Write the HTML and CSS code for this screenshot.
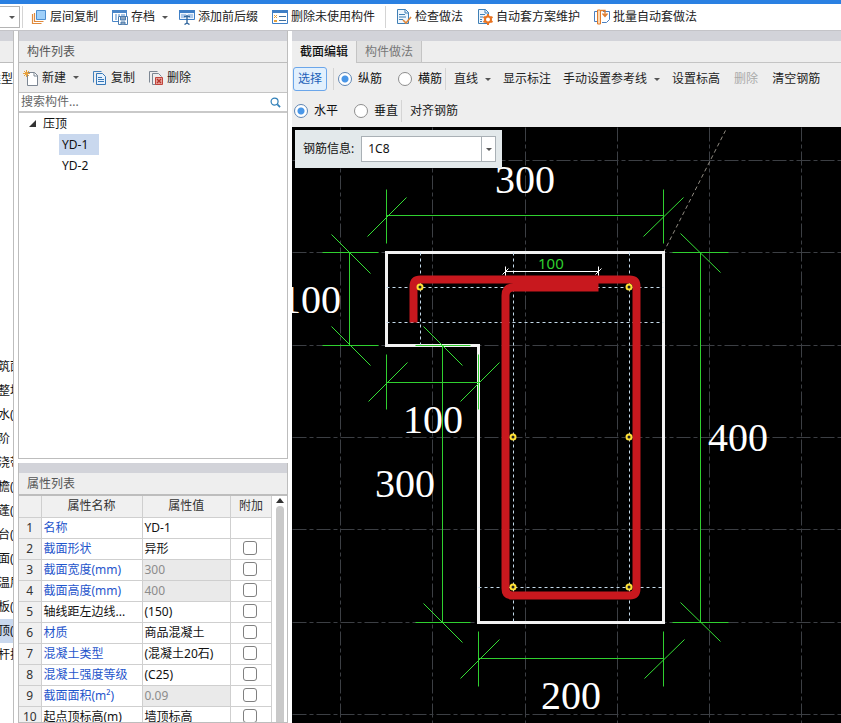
FILE: index.html
```
<!DOCTYPE html>
<html lang="zh-CN">
<head>
    <meta charset="UTF-8">
    <title>截面编辑</title>
    <link rel="stylesheet" href="styles.css">
</head>
<body>

<header class="topbar">
    <span class="filter"><select aria-label="楼层"><option></option></select><i class="caret"></i></span>
    <span class="sep"></span>
    <button class="tool">
        <svg class="icon" viewBox="0 0 16 16"><path d="M1.500 5v9.500h9M3.500 4v8.500h9" fill="none" stroke="#e08a3c" stroke-width="1.200"/><path d="M5.500 1.500h9v9h-9z" fill="#9fd0fa" stroke="#4d8fd0"/></svg>
        层间复制
    </button>
    <button class="tool has-caret">
        <svg class="icon" viewBox="0 0 16 16"><path d="M.500 1.500h14v11H.500z" fill="#fff" stroke="#4a86c8"/><path d="M0 1h15v3H0z" fill="#4a86c8"/><path d="M3 6h2M6 6h2M9 6h4M3 8h2M3 10h2" stroke="#4a86c8"/><path d="M6.500 7.500h9v8h-9z" fill="#fff" stroke="#4a7cb0"/><path d="M8.500 8v3h5V8M9 13h4v3H9z" fill="#8ba3bd" stroke="#4a7cb0"/></svg>
        存档<i class="caret"></i>
    </button>
    <button class="tool">
        <svg class="icon" viewBox="0 0 16 16"><path d="M.500 1.500h15v9H.500z" fill="#eef5fd" stroke="#3f7fc6"/><path d="M0 1h16v3H0z" fill="#3f7fc6"/><path d="M2 6h5M2 8h4M9 6h5M10 8h4" stroke="#6a9dd8"/><path d="M8 6v9M5 7.500h6M5.500 15.500 8 14l2.500 1.500" fill="none" stroke="#34699f" stroke-width="1.400"/></svg>
        添加前后缀
    </button>
    <button class="tool">
        <svg class="icon" viewBox="0 0 16 16"><path d="M.500 1.500h15v13H.500z" fill="#fff" stroke="#3f7fc6"/><path d="M0 1h16v3H0z" fill="#3f7fc6"/><path d="m2 6 3 3m0-3L2 9" stroke="#e6a23c"/><path d="M2 12h3" stroke="#e6a23c" stroke-width="2"/><path d="M7 7.500h7M7 11.500h7" stroke="#3f6f9f"/></svg>
        删除未使用构件
    </button>
    <span class="sep"></span>
    <button class="tool">
        <svg class="icon" viewBox="0 0 16 16"><path d="M1.500.500h8l3 3v11h-11z" fill="#eef6fd" stroke="#3f7fb5"/><path d="M9 .500V4h4M3 5.500h6M3 8h7M3 10.500h4" fill="none" stroke="#3f7fb5"/><path d="m7 11 3 3 5-6" fill="none" stroke="#e0873a" stroke-width="1.600"/></svg>
        检查做法
    </button>
    <button class="tool">
        <svg class="icon" viewBox="0 0 16 16"><path d="M1.500.500h7l3 3v11h-10z" fill="#eef6fd" stroke="#3f7fb5"/><path d="M8 .500V4h4M3 5.500h5M3 8h3M3 10.500h2M3 12.500h2" fill="none" stroke="#3f7fb5"/><path d="M11 5v11M6.500 7.800l9 5.400M15.500 7.800l-9 5.400" stroke="#e87422" stroke-width="2"/><circle cx="11" cy="10.500" r="3" fill="#fff" stroke="#e87422" stroke-width="2"/></svg>
        自动套方案维护
    </button>
    <button class="tool">
        <svg class="icon" viewBox="0 0 16 16"><path d="M4 2.500H.500v10H4M9 2.500h6.500v8l-3 3H8" fill="#fff" stroke="#4a7fc0"/><path d="M3.500 1h3v14h-3z" fill="#fbd9b5" stroke="#e07c2c"/><path d="M7 1.500h4v5M8.500 4.500l2.500 3 2.500-3" fill="none" stroke="#e07c2c" stroke-width="1.400"/></svg>
        批量自动套做法
    </button>
</header>

<main class="workspace">

    <nav class="modules">
        <div class="strip"></div>
        <div class="modules-title"></div>
        <p class="modules-head">类型</p>
        <ul>
            <li>筑面</li>
            <li>整地</li>
            <li>水(</li>
            <li>阶</li>
            <li>浇带</li>
            <li>檐(</li>
            <li>蓬(</li>
            <li>台(</li>
            <li>面(</li>
            <li>温层</li>
            <li>板(</li>
            <li class="current">顶(</li>
            <li>杆扶</li>
        </ul>
    </nav>

    <div class="sidebar">
        <section class="panel">
            <div class="strip"></div>
            <h2 class="panel-title">构件列表</h2>
            <div class="panel-tools">
                <button class="tool">
                    <svg class="icon" viewBox="0 0 16 16"><path d="M4.500 2.500h7l3 3v10h-10z" fill="#fff" stroke="#7d8793"/><path d="M11 2.500V6h4" fill="none" stroke="#7d8793"/><path d="M3.500 0v7M0 3.500h7M1 1l5 5M6 1 1 6" stroke="#e9a13b"/></svg>
                    新建<i class="caret"></i>
                </button>
                <button class="tool">
                    <svg class="icon" viewBox="0 0 16 16"><path d="M1.500 12.500v-11h8" fill="none" stroke="#4381bd"/><path d="M4.500 3.500h6l3 3v8h-9z" fill="#e6f1fc" stroke="#3577b8"/><path d="M6 7.500h4M6 9.500h6M6 11.500h6" stroke="#3577b8"/></svg>
                    复制
                </button>
                <button class="tool">
                    <svg class="icon" viewBox="0 0 16 16"><path d="M1.500 12.500v-11h8M4.500 14.500v-11h6l3 3" fill="none" stroke="#7d8793"/><path d="M4.500 14.500H8" stroke="#7d8793"/><path d="M7.500 7.500h7v7h-7z" fill="#e9a39c" stroke="#c0453c"/><path d="m9 9 4 4m0-4-4 4" stroke="#b5352c" stroke-width="1.300"/></svg>
                    删除
                </button>
            </div>
            <label class="search">
                <input type="text" placeholder="搜索构件..." aria-label="搜索构件">
                <svg class="lens" viewBox="0 0 12 12"><circle cx="5" cy="5" r="3.800" fill="none" stroke="#2f7fb8" stroke-width="1.300"/><path d="m8 8 3 3" stroke="#2f7fb8" stroke-width="1.800"/></svg>
            </label>
            <div class="tree">
                <div class="branch"><svg class="twist" viewBox="0 0 7 7"><path d="M7 0v7H0z" fill="#333"/></svg>压顶</div>
                <ul>
                    <li><span class="leaf current">YD-1</span></li>
                    <li><span class="leaf">YD-2</span></li>
                </ul>
            </div>
        </section>

        <section class="panel">
            <div class="strip"></div>
            <h2 class="panel-title">属性列表</h2>
            <div class="props-wrap">
                <table class="props">
                    <colgroup><col class="c-num"><col class="c-name"><col><col class="c-add"></colgroup>
                    <thead>
                        <tr><th></th><th>属性名称</th><th>属性值</th><th>附加</th></tr>
                    </thead>
                    <tbody>
                        <tr><th>1</th><td class="key">名称</td><td>YD-1</td><td></td></tr>
                        <tr><th>2</th><td class="key">截面形状</td><td>异形</td><td class="add"><input type="checkbox" aria-label="附加 截面形状"></td></tr>
                        <tr><th>3</th><td class="key">截面宽度(mm)</td><td class="locked">300</td><td class="add"><input type="checkbox" aria-label="附加 截面宽度"></td></tr>
                        <tr><th>4</th><td class="key">截面高度(mm)</td><td class="locked">400</td><td class="add"><input type="checkbox" aria-label="附加 截面高度"></td></tr>
                        <tr><th>5</th><td>轴线距左边线...</td><td>(150)</td><td class="add"><input type="checkbox" aria-label="附加 轴线距左边线"></td></tr>
                        <tr><th>6</th><td class="key">材质</td><td>商品混凝土</td><td class="add"><input type="checkbox" aria-label="附加 材质"></td></tr>
                        <tr><th>7</th><td class="key">混凝土类型</td><td>(混凝土20石)</td><td class="add"><input type="checkbox" aria-label="附加 混凝土类型"></td></tr>
                        <tr><th>8</th><td class="key">混凝土强度等级</td><td>(C25)</td><td class="add"><input type="checkbox" aria-label="附加 混凝土强度等级"></td></tr>
                        <tr><th>9</th><td class="key">截面面积(m²)</td><td class="locked">0.09</td><td class="add"><input type="checkbox" aria-label="附加 截面面积"></td></tr>
                        <tr><th>10</th><td>起点顶标高(m)</td><td>墙顶标高</td><td class="add"><input type="checkbox" aria-label="附加 起点顶标高"></td></tr>
                    </tbody>
                </table>
                <div class="scrollbar">
                    <svg class="scroll-up" viewBox="0 0 8 5"><path d="M0 5 4 0l4 5z" fill="#333"/></svg>
                    <div class="thumb"></div>
                </div>
            </div>
        </section>
    </div>

    <section class="editor">
        <div class="strip"></div>
        <div class="tabs">
            <button class="tab active">截面编辑</button>
            <button class="tab">构件做法</button>
        </div>

        <div class="editor-tools">
            <div class="row">
                <button class="tool pick">选择</button>
                <span class="sep"></span>
                <label class="radio"><input type="radio" name="bar" checked>纵筋</label>
                <label class="radio"><input type="radio" name="bar">横筋</label>
                <span class="sep"></span>
                <button class="tool">直线<i class="caret"></i></button>
                <button class="tool">显示标注</button>
                <button class="tool">手动设置参考线<i class="caret"></i></button>
                <button class="tool">设置标高</button>
                <button class="tool" disabled>删除</button>
                <button class="tool">清空钢筋</button>
            </div>
            <div class="row">
                <label class="radio"><input type="radio" name="dir" checked>水平</label>
                <label class="radio"><input type="radio" name="dir">垂直</label>
                <span class="sep"></span>
                <button class="tool">对齐钢筋</button>
            </div>
        </div>

        <div class="canvas">
            <svg class="drawing">
                <g transform="translate(.5 .5)">
                    <!-- axis grid -->
                    <path class="grid" d="M48 0v2000M140 0v2000M233 0v2000M325 0v2000M417 0v2000M509 0v2000M0 33h3000M0 125h3000M0 218h3000M0 310h3000M0 402h3000M0 495h3000M0 587h3000"/>
                    <path class="ray" d="M371 125 433 3"/>

                    <!-- concrete outline -->
                    <path class="outline" d="M94 125H371V495H186V218H94z"/>
                    <path class="guide" d="M128 125v93M221 125v370M337 125v370M94 160h277M94 195h277M186 460h185"/>

                    <!-- dimensions -->
                    <path class="dim" d="M94 88H371M94 62v54M371 62v54
                        M57 125v93M30 125h56M30 218h56
                        M94 255h92M94 227v55M186 227v55
                        M150 218v277M123 218h55M123 495h55
                        M408 125v370M380 125h56M380 495h56
                        M186 531h185M186 504v55M371 504v55"/>
                    <path class="slash" d="M75 109 114 70M351 109 391 70
                        M39 107 78 146M39 199 78 238
                        M76 274 115 235M168 274 207 235
                        M131 199 170 238M131 476 170 515
                        M388 106 428 145M388 475 428 514
                        M168 551 207 512M352 551 392 512"/>

                    <!-- stirrup -->
                    <path class="bar" d="M121 195V159q0-7 7-7H337q7 0 7 7V461q0 7-7 7H220q-7 0-7-7V168q0-8 8-8H306"/>
                    <path class="lap" d="M213 144h93M213 139v9M306 139v9M210 147l6-6M303 147l6-6"/>
                </g>
                <g class="rebar">
                    <circle cx="128" cy="160" r="2.500"/>
                    <circle cx="337" cy="160" r="2.500"/>
                    <circle cx="221" cy="310" r="2.500"/>
                    <circle cx="337" cy="310" r="2.500"/>
                    <circle cx="221" cy="460" r="2.500"/>
                    <circle cx="337" cy="460" r="2.500"/>
                </g>
                <text class="lap-size" x="246" y="142">100</text>
                <g class="size">
                    <text x="203" y="66">300</text>
                    <text x="-11" y="186">100</text>
                    <text x="111" y="306">100</text>
                    <text x="83" y="370">300</text>
                    <text x="416" y="324">400</text>
                    <text x="249" y="582">200</text>
                </g>
            </svg>
            <div class="rebar-info">
                <label for="rebar">钢筋信息:</label>
                <div class="combo">
                    <input type="text" id="rebar" value="1C8">
                    <button aria-label="展开"><i class="caret"></i></button>
                </div>
            </div>
        </div>
    </section>

</main>

</body>
</html>
```
FILE: styles.css
```
* {
    box-sizing: border-box;
}

body {
    margin: 0;
    height: 100vh;
    display: flex;
    flex-direction: column;
    overflow: hidden;
    background: #fff;
    color: #111;
    font: 12px/16px "Noto Sans", "Noto Sans CJK SC", sans-serif;
}

button, input, select {
    font: inherit;
    color: inherit;
}

ul {
    margin: 0;
    padding: 0;
    list-style: none;
}

/* shared bits */
.tool {
    display: flex;
    align-items: center;
    gap: 3px;
    padding: 0 7px;
    border: 0;
    background: none;
    color: #222;
    white-space: nowrap;
}
.tool:disabled {
    color: #aaa;
}
.icon {
    width: 16px;
    height: 16px;
    flex: none;
}
.caret {
    flex: none;
    border: 3px solid transparent;
    border-top-color: #555;
    border-bottom: 0;
}
.tool .caret {
    margin-left: 4px;
}
.sep {
    flex: none;
    width: 1px;
    height: 22px;
    margin: 0 3px;
    background: #d4d4d4;
}
.strip {
    flex: none;
    height: 10px;
    background: #d2d3d9;
}

/* top toolbar */
.topbar {
    flex: none;
    height: 31px;
    display: flex;
    align-items: center;
    border-top: 4px solid #2a80e2;
    border-bottom: 1px solid #c4c4c8;
}
.topbar .has-caret {
    padding-right: 4px;
}
.filter {
    display: flex;
    align-items: center;
    justify-content: flex-end;
    width: 20px;
    height: 22px;
    padding-right: 4px;
    border: 1px solid #b4b4b4;
    border-left: 0;
    position: relative;
}
.filter select {
    position: absolute;
    inset: 0;
    appearance: none;
    border: 0;
    background: none;
}
.filter + .sep {
    margin: 0 1px 0 2px;
}

.workspace {
    flex: 1;
    min-height: 0;
    display: grid;
    grid-template-columns: 14px 270px 1fr;
    column-gap: 4px;
}

/* module tree at the far left, mostly scrolled out of view */
.modules {
    overflow: hidden;
    border-right: 1px solid #bdbdbd;
    white-space: nowrap;
}
.modules-title {
    height: 22px;
    background: #eee;
    border-bottom: 1px solid #bdbdbd;
}
.modules-head {
    margin: 0 0 260px;
    line-height: 32px;
    direction: rtl;
}
.modules li {
    height: 24px;
    line-height: 24px;
    text-indent: -2px;
}
.modules .current {
    background: #c9d8ee;
}

/* side panels */
.sidebar {
    min-height: 0;
    display: grid;
    grid-template-rows: 1fr 260px;
    row-gap: 4px;
}
.panel {
    min-height: 0;
    display: flex;
    flex-direction: column;
    border: 1px solid #bdbdbd;
    border-top: 0;
    overflow: hidden;
}
.panel-title {
    flex: none;
    height: 22px;
    margin: 0;
    padding-left: 8px;
    background: #eee;
    border-bottom: 1px solid #bdbdbd;
    color: #555;
    font-size: 12px;
    font-weight: 400;
    line-height: 21px;
}
.panel-tools {
    flex: none;
    height: 30px;
    display: flex;
    align-items: center;
    gap: 13px;
    padding-left: 4px;
    background: #eee;
    border-bottom: 1px solid #c4c4c4;
}
.panel-tools .tool {
    padding: 0;
}
.search {
    flex: none;
    height: 20px;
    display: flex;
    align-items: center;
    padding-right: 6px;
    border-bottom: 2px solid #c9c9c9;
}
.search input {
    flex: 1;
    min-width: 0;
    padding: 0 2px;
    border: 0;
    outline: 0;
    background: none;
}
.search input::placeholder {
    color: #666;
}
.lens {
    width: 11px;
    height: 11px;
}
.tree {
    flex: 1;
    line-height: 21px;
}
.branch {
    display: flex;
    align-items: center;
    gap: 7px;
    padding-left: 10px;
}
.twist {
    width: 7px;
    height: 7px;
}
.tree ul {
    padding-left: 40px;
}
.leaf {
    display: inline-block;
    width: 40px;
    padding-left: 3px;
}
.leaf.current {
    background: #c9d8ee;
}

/* property table */
.props-wrap {
    flex: 1;
    min-height: 0;
    display: flex;
    border-top: 1px solid #bdbdbd;
}
.props {
    flex: 1;
    height: 0;
    table-layout: fixed;
    border-collapse: collapse;
}
.c-num {
    width: 22px;
}
.c-name {
    width: 101px;
}
.c-add {
    width: 41px;
}
.props th, .props td {
    height: 21px;
    padding: 0 2px;
    border-right: 1px solid #cfcfcf;
    border-bottom: 1px solid #cfcfcf;
    font-weight: 400;
    line-height: 20px;
    text-align: left;
    white-space: nowrap;
    overflow: hidden;
}
.props th {
    padding: 0;
    background: #f0f0f0;
    color: #333;
    text-align: center;
}
.props .key {
    color: #1f56cc;
}
.props .locked {
    background: #eaeaea;
    color: #8c8c8c;
}
.props .add {
    padding: 0 2px 2px 0;
}
.add input {
    appearance: none;
    display: block;
    width: 14px;
    height: 14px;
    margin: 0 auto;
    border: 1px solid #808080;
    border-radius: 3px;
    background: #fff;
}
.scrollbar {
    flex: none;
    width: 15px;
    display: flex;
    flex-direction: column;
    align-items: center;
    gap: 3px;
    padding-top: 2px;
}
.scroll-up {
    width: 8px;
    height: 5px;
}
.thumb {
    flex: 1;
    width: 8px;
    border-radius: 4px 4px 0 0;
    background: #c9c9c9;
}

/* section editor */
.editor {
    min-width: 0;
    min-height: 0;
    display: flex;
    flex-direction: column;
    overflow: hidden;
    background: #eee;
}
.tabs {
    flex: none;
    height: 22px;
    display: flex;
    border-bottom: 1px solid #c4c4c4;
}
.tab {
    width: 65px;
    padding: 0;
    border: 0;
    border-right: 1px solid #c4c4c4;
    background: #e0e0e0;
    color: #777;
}
.tab.active {
    margin-bottom: -1px;
    background: #eee;
    color: #111;
    font-weight: 500;
}
.editor-tools {
    flex: none;
    padding-bottom: 1px;
}
.row {
    height: 32px;
    display: flex;
    align-items: center;
}
.row + .row {
    height: 31px;
}
.row .sep {
    margin-right: 2px;
}
.row .tool {
    padding: 0 6px;
}
.row .tool:disabled {
    padding: 0 8px;
}
.row .pick {
    height: 24px;
    margin: 0 3px 0 1px;
    padding: 0 4px;
    border: 1px solid #6ba6ea;
    border-radius: 3px;
    background: #e2f0fd;
    color: #1c62b9;
}
.radio {
    display: flex;
    align-items: center;
    gap: 6px;
    padding-left: 2px;
    white-space: nowrap;
}
.radio + .radio {
    padding-left: 16px;
}
.radio input {
    appearance: none;
    width: 14px;
    height: 14px;
    margin: 0;
    border: 1px solid #8e8e8e;
    border-radius: 50%;
    background: #fff;
}
.radio input:checked {
    border-color: #5f86b4;
    background: radial-gradient(circle, #4a97e8 3px, #fff 4px);
}

.canvas {
    flex: 1;
    min-height: 0;
    position: relative;
    background: #000;
}
.drawing {
    display: block;
    width: 100%;
    height: 100%;
}
.drawing path {
    fill: none;
}
.grid {
    stroke: #3c3f44;
    stroke-dasharray: 14 3 4 3;
}
.ray {
    stroke: #8f8a80;
    stroke-dasharray: 4 3;
}
.outline {
    stroke: #f2f2f2;
    stroke-width: 3;
}
.guide {
    stroke: #c4daea;
    stroke-dasharray: 3 3;
}
.dim {
    stroke: #2fd02f;
}
.slash {
    stroke: #35e035;
}
.bar {
    stroke: #c8181e;
    stroke-width: 8;
}
.rebar circle {
    fill: #222;
    stroke: #ffe135;
    stroke-width: 2;
}
.lap {
    stroke: #fff;
}
.lap-size {
    fill: #2fd02f;
    font-size: 15px;
}
.size {
    fill: #fff;
    font: 40px "Liberation Serif", serif;
}

.rebar-info {
    position: absolute;
    top: 3px;
    left: 3px;
    display: flex;
    align-items: center;
    gap: 7px;
    padding: 6px 6px 6px 8px;
    background: #e3e9eb;
}
.combo {
    width: 135px;
    height: 26px;
    display: flex;
    border: 1px solid #a9b0b5;
    background: #fff;
}
.combo input {
    flex: 1;
    min-width: 0;
    padding: 0 6px;
    border: 0;
    outline: 0;
    background: none;
}
.combo button {
    width: 14px;
    display: grid;
    place-items: center;
    padding: 0;
    border: 0;
    border-left: 1px solid #a9b0b5;
    background: none;
}
```
